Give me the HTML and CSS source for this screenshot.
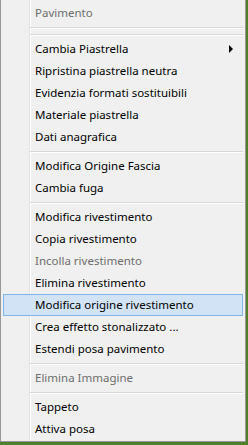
FILE: index.html
```html
<!DOCTYPE html>
<html lang="it">
  <head>
    <meta charset="UTF-8" />
    <title>Menu</title>
    <link rel="stylesheet" href="styles.css">
  </head>
  <body>
    <div class="menu">
      <div class="item off">Pavimento</div>
      <div class="sep"></div>
      <div class="sep"></div>
      <div class="item">Cambia Piastrella <span class="arrow"></span></div>
      <div class="item">Ripristina piastrella neutra</div>
      <div class="item">Evidenzia formati sostituibili</div>
      <div class="item">Materiale piastrella</div>
      <div class="item">Dati anagrafica</div>
      <div class="sep"></div>
      <div class="item">Modifica Origine Fascia</div>
      <div class="item">Cambia fuga</div>
      <div class="sep"></div>
      <div class="item">Modifica rivestimento</div>
      <div class="item">Copia rivestimento</div>
      <div class="item off">Incolla rivestimento</div>
      <div class="item">Elimina rivestimento</div>
      <div class="item hover">Modifica origine rivestimento</div>
      <div class="item">Crea effetto stonalizzato ...</div>
      <div class="item">Estendi posa pavimento</div>
      <div class="sep"></div>
      <div class="item off">Elimina Immagine</div>
      <div class="sep"></div>
      <div class="item">Tappeto</div>
      <div class="item">Attiva posa</div>
    </div>
  </body>
</html>
```

FILE: styles.css
```css
body {
  margin: 0;
  background: #4f7f2a;
  font-family: "Noto Sans", "Open Sans", sans-serif;
  font-size: 11.5px;
}

.menu {
  width: 246px;
  box-sizing: border-box;
  border: 1px solid #979797;
  border-top: none;
  padding: 2px 2px 1px 2px;
  background: linear-gradient(to right, transparent 28px, #e2e3e3 28px, #e2e3e3 29px, #fff 29px, #fff 30px, transparent 30px), #f0f0f0;
}

.item {
  height: 20px;
  line-height: 20px;
  border: 1px solid transparent;
  padding-left: 31px;
  color: #000;
  display: flex;
  align-items: center;
  justify-content: space-between;
  white-space: nowrap;
}

.off {
  color: #6d6d6d;
}

.hover {
  background: #d1e3f5;
  border-color: #7eb4ea;
}

.arrow {
  width: 0;
  height: 0;
  border-left: 4px solid #000;
  border-top: 4px solid transparent;
  border-bottom: 4px solid transparent;
  margin-right: 9px;
}

.sep {
  height: 7px;
  margin-left: 27px;
  box-sizing: border-box;
  padding-top: 3px;
}

.sep::before {
  content: "";
  display: block;
  height: 1px;
  background: #d7d7d7;
  border-bottom: 1px solid #fff;
}
```
